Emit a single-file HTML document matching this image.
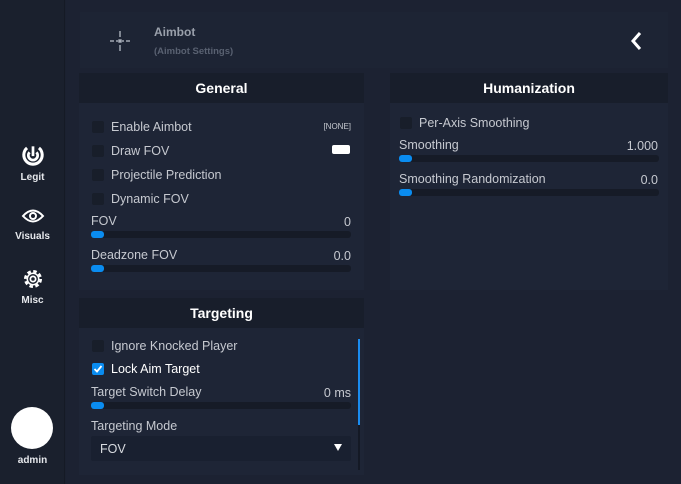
<!DOCTYPE html><html><head><style>
*{margin:0;padding:0;box-sizing:border-box}
body{width:681px;height:484px;background:#1b2130;font-family:"Liberation Sans",sans-serif;position:relative;overflow:hidden;color:#c9ccd3}
.side{position:absolute;left:0;top:0;width:65px;height:484px;background:#1a202d;border-right:1px solid #151a25}
.nav{position:absolute;left:0;width:65px;text-align:center;color:#e6e8ec;font-size:10px;font-weight:bold}
.main{position:absolute;left:66px;top:0;right:0;bottom:0;background:#1c2232}
.hdr{position:absolute;left:80px;top:12px;width:588px;height:56px;background:#1d2434}
.panel{position:absolute;background:#1e2536}
.ph{height:30px;background:#181e2b;color:#fff;font-weight:bold;font-size:14px;text-align:center;line-height:30px}
.row{position:absolute;font-size:12.5px;color:#c6c9d0}
.cb{position:absolute;width:12px;height:12px;background:#181e2a;border-radius:2px}
.track{position:absolute;height:7px;background:#161b27;border-radius:3px}
.knob{position:absolute;left:0;top:0;width:13px;height:7px;background:#0a8cf0;border-radius:3px}
.val{position:absolute;font-size:12.5px;color:#c6c9d0;text-align:right}
</style></head><body>
<div class="side">
 <div class="nav" style="top:143px"><svg width="26" height="24" viewBox="0 0 24 22"><path d="M6.5 4.5a8.5 8.5 0 1 0 11 0" fill="none" stroke="#fff" stroke-width="2.8"/><path d="M8.8 8.5a4.3 4.3 0 1 0 6.4 0" fill="none" stroke="#fff" stroke-width="2.5"/><line x1="12" y1="3" x2="12" y2="12" stroke="#fff" stroke-width="2.5"/></svg><div style="margin-top:2px">Legit</div></div>
 <div class="nav" style="top:208px"><svg width="24" height="16" viewBox="0 0 24 16"><path d="M2 8Q12 -3 22 8Q12 19 2 8Z" fill="none" stroke="#fff" stroke-width="2"/><circle cx="12" cy="8" r="3" fill="none" stroke="#fff" stroke-width="2"/></svg><div style="margin-top:4px">Visuals</div></div>
 <div class="nav" style="top:268px"><svg width="22" height="22" viewBox="0 0 20 20"><circle cx="10" cy="10" r="7" fill="none" stroke="#fff" stroke-width="2.4" stroke-dasharray="3.2 2.3"/><circle cx="10" cy="10" r="5.2" fill="none" stroke="#fff" stroke-width="1.4"/><circle cx="10" cy="10" r="2.4" fill="none" stroke="#fff" stroke-width="1.6"/></svg><div style="margin-top:2px">Misc</div></div>
 <div style="position:absolute;left:11px;top:407px;width:42px;height:42px;border-radius:50%;background:#fff"></div>
 <div class="nav" style="top:455px">admin</div>
</div>
<div class="main"></div>
<div class="hdr"></div>
<svg style="position:absolute;left:108px;top:29px" width="24" height="24" viewBox="0 0 24 24" stroke="#aab0bb" stroke-width="1.4"><line x1="12" y1="2" x2="12" y2="8"/><line x1="12" y1="16" x2="12" y2="22"/><line x1="2" y1="12" x2="6" y2="12"/><line x1="8" y1="12" x2="10" y2="12"/><line x1="14" y1="12" x2="16" y2="12"/><line x1="18" y1="12" x2="22" y2="12"/><rect x="11" y="11" width="2" height="2" fill="#aab0bb"/></svg>
<div style="position:absolute;left:154px;top:25px;font-size:12px;font-weight:bold;color:#9aa0ab">Aimbot</div>
<div style="position:absolute;left:154px;top:46px;font-size:9.5px;font-weight:bold;color:#596171">(Aimbot Settings)</div>
<svg style="position:absolute;left:629px;top:31px" width="14" height="20" viewBox="0 0 14 20"><path d="M11 2L4 10L11 18" fill="none" stroke="#fff" stroke-width="3"/></svg>

<div class="panel" style="left:79px;top:73px;width:285px;height:217px"><div class="ph">General</div></div>
<div class="cb" style="left:92px;top:121px"></div><div class="row" style="left:111px;top:120px">Enable Aimbot</div><div class="val" style="left:300px;top:122px;width:51px;font-size:8px">[NONE]</div>
<div class="cb" style="left:92px;top:145px"></div><div class="row" style="left:111px;top:144px">Draw FOV</div><div style="position:absolute;left:332px;top:145px;width:18px;height:9px;background:#fff;border-radius:2px"></div>
<div class="cb" style="left:92px;top:169px"></div><div class="row" style="left:111px;top:168px">Projectile Prediction</div>
<div class="cb" style="left:92px;top:193px"></div><div class="row" style="left:111px;top:192px">Dynamic FOV</div>
<div class="row" style="left:91px;top:214px">FOV</div><div class="val" style="left:300px;top:215px;width:51px">0</div>
<div class="track" style="left:91px;top:231px;width:260px"><div class="knob"></div></div>
<div class="row" style="left:91px;top:248px">Deadzone FOV</div><div class="val" style="left:300px;top:249px;width:51px">0.0</div>
<div class="track" style="left:91px;top:265px;width:260px"><div class="knob"></div></div>

<div class="panel" style="left:390px;top:73px;width:278px;height:217px"><div class="ph">Humanization</div></div>
<div class="cb" style="left:400px;top:117px"></div><div class="row" style="left:419px;top:116px">Per-Axis Smoothing</div>
<div class="row" style="left:399px;top:138px">Smoothing</div><div class="val" style="left:600px;top:139px;width:58px">1.000</div>
<div class="track" style="left:399px;top:155px;width:260px"><div class="knob"></div></div>
<div class="row" style="left:399px;top:172px">Smoothing Randomization</div><div class="val" style="left:600px;top:173px;width:58px">0.0</div>
<div class="track" style="left:399px;top:189px;width:260px"><div class="knob"></div></div>

<div class="panel" style="left:79px;top:298px;width:285px;height:177px"><div class="ph">Targeting</div></div>
<div style="position:absolute;left:358px;top:339px;width:2px;height:86px;background:#1a8cf0"></div>
<div style="position:absolute;left:358px;top:425px;width:2px;height:45px;background:#141925"></div>
<div class="cb" style="left:92px;top:340px"></div><div class="row" style="left:111px;top:339px">Ignore Knocked Player</div>
<div class="cb" style="left:92px;top:363px;background:#0a8cf0"><svg width="12" height="12" viewBox="0 0 12 12" style="position:absolute;left:0;top:0"><path d="M2.5 6L5 8.5L9.5 3" fill="none" stroke="#fff" stroke-width="1.8"/></svg></div><div class="row" style="left:111px;top:362px;color:#fff">Lock Aim Target</div>
<div class="row" style="left:91px;top:385px">Target Switch Delay</div><div class="val" style="left:290px;top:386px;width:61px">0 ms</div>
<div class="track" style="left:91px;top:402px;width:260px"><div class="knob"></div></div>
<div class="row" style="left:91px;top:419px">Targeting Mode</div>
<div style="position:absolute;left:91px;top:436px;width:260px;height:25px;background:#192030;border-radius:2px"></div>
<div class="row" style="left:100px;top:442px;color:#d8dbe0">FOV</div>
<div style="position:absolute;left:334px;top:444px;width:0;height:0;border-left:4.5px solid transparent;border-right:4.5px solid transparent;border-top:7px solid #fff"></div>
</body></html>
